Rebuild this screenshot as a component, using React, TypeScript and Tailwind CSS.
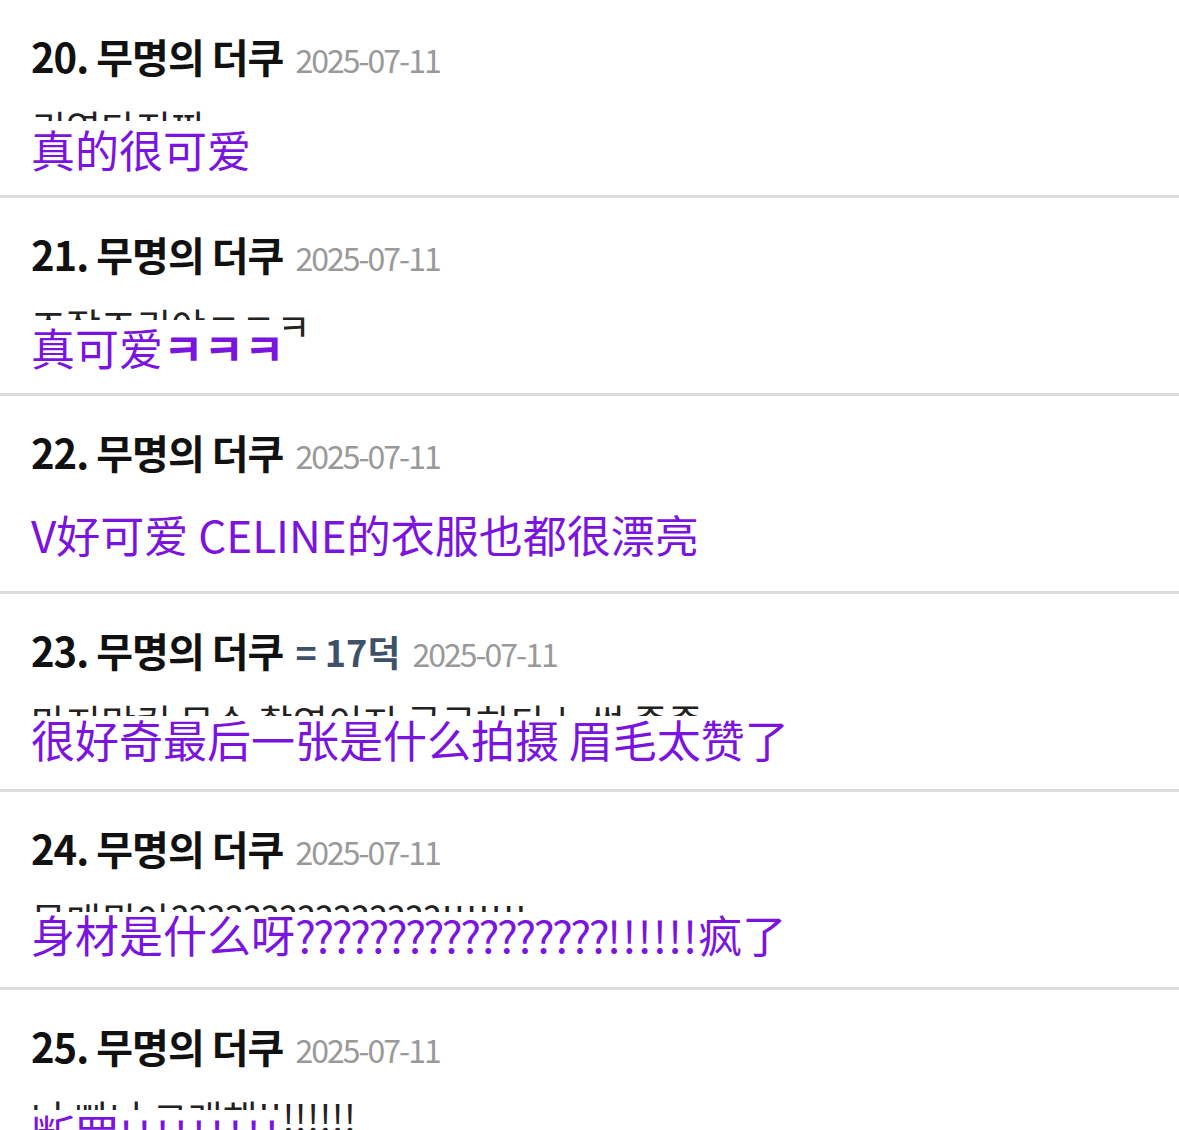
import React from "react";

type Item = {
  num: string;
  extra?: string;
  korean: string;
  chinese: React.ReactNode;
  cut: number;
  lh: number;
};

const Q = ({ children }: { children: React.ReactNode }) => (
  <span className="tracking-[-2.5px]">{children}</span>
);
const E = ({ children, wide }: { children: React.ReactNode; wide?: boolean }) => (
  <span className={wide ? "tracking-[4px]" : "tracking-[1px]"}>{children}</span>
);

const items: Item[] = [
  { num: "20.", korean: "귀엽다진짜", chinese: "真的很可爱", cut: 121, lh: 56 },
  {
    num: "21.",
    korean: "조잘조귀야ㅋㅋㅋ",
    chinese: (
      <>
        真可爱<span className="font-bold">ㅋㅋㅋ</span>
      </>
    ),
    cut: 122,
    lh: 54,
  },
  { num: "22.", korean: "브이귀여워 셀린느옷도다예뻐", chinese: "V好可爱 CELINE的衣服也都很漂亮", cut: 108, lh: 60 },
  {
    num: "23.",
    extra: "= 17덕",
    korean: "마지막컷 무슨 촬영이지 궁금하다 눈썹 좋좋",
    chinese: "很好奇最后一张是什么拍摄 眉毛太赞了",
    cut: 122,
    lh: 46,
  },
  {
    num: "24.",
    korean: "몸매뭐야???????????????!!!!!!!",
    chinese: (
      <>
        身材是什么呀<Q>?????????????????</Q>
        <E>!!!!!!</E>疯了
      </>
    ),
    cut: 120,
    lh: 44,
  },
  {
    num: "25.",
    korean: "나 빠나 그래해!!!!!!!!",
    chinese: (
      <>
        断罢<E wide>!!!!!!!!!</E>
      </>
    ),
    cut: 120,
    lh: 48,
  },
];

const kr = { fontFamily: '"Noto Sans CJK KR", "Noto Sans", sans-serif' };
const sc = { fontFamily: '"Noto Sans CJK SC", "Noto Sans CJK KR", sans-serif' };

function Row({ item }: { item: Item }) {
  return (
    <div className="relative h-[198px] border-b-[3px] border-[#dcdcdc] bg-white px-[31px]">
      <div className="flex items-baseline pt-[30px] leading-[52px]" style={kr}>
        <span className="text-[40px] font-bold tracking-[-1px] text-[#111]">
          {item.num} 무명의 더쿠
        </span>
        {item.extra && (
          <span className="ml-[12px] text-[36px] font-semibold text-[#3d5168]">{item.extra}</span>
        )}
        <span className="ml-[12px] text-[32px] tracking-[-2px] text-[#999]">2025-07-11</span>
      </div>
      <div className="mt-[20px] whitespace-nowrap text-[38px] leading-[44px] text-[#222]" style={kr}>
        {item.korean}
      </div>
      <div
        className="absolute left-[31px] whitespace-nowrap bg-white text-[44px] text-[#7a14de]"
        style={{ ...sc, top: item.cut, lineHeight: `${item.lh}px` }}
      >
        {item.chinese}
      </div>
    </div>
  );
}

export default function App() {
  return (
    <div className="h-[1130px] w-[1179px] overflow-hidden bg-white">
      {items.map((it) => (
        <Row key={it.num} item={it} />
      ))}
    </div>
  );
}
